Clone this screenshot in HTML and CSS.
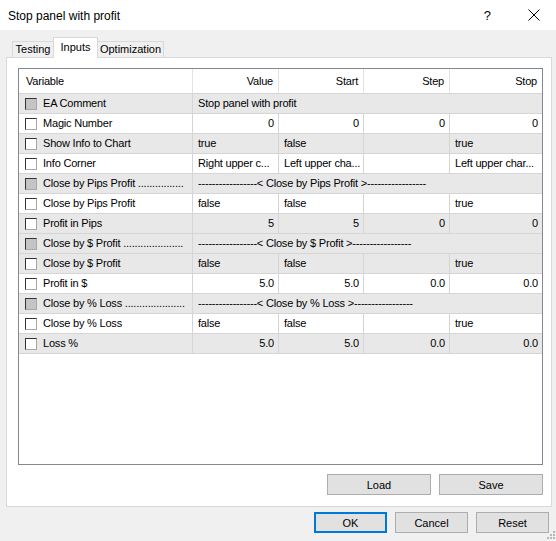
FILE: index.html
```html
<!DOCTYPE html>
<html lang="en">

<head>
    <meta charset="UTF-8">
    <title>Stop panel with profit</title>
    <link rel="stylesheet" href="styles.css">
</head>

<body>
    <div class="titlebar">
        <span class="title">Stop panel with profit</span>
        <span class="help">?</span>
        <svg class="close" width="12" height="12" viewBox="0 0 12 12">
            <path d="M0.5 0.5 L11.5 11.5 M11.5 0.5 L0.5 11.5" stroke="#000" stroke-width="1" fill="none" />
        </svg>
    </div>

    <div class="dialog">
        <div class="tabs">
            <div class="tab tab-first">Testing</div>
            <div class="tab active">Inputs</div>
            <div class="tab tab-last">Optimization</div>
        </div>

        <div class="panel">
            <div class="grid">
                <div class="row head">
                    <div class="cell var-head">Variable</div>
                    <div class="cell num">Value</div>
                    <div class="cell num">Start</div>
                    <div class="cell num">Step</div>
                    <div class="cell num">Stop</div>
                </div>

                <div class="row alt">
                    <div class="cell var"><span class="check off"></span>EA Comment</div>
                    <div class="cell span">Stop panel with profit</div>
                </div>
                <div class="row">
                    <div class="cell var"><span class="check"></span>Magic Number</div>
                    <div class="cell num">0</div>
                    <div class="cell num">0</div>
                    <div class="cell num">0</div>
                    <div class="cell num">0</div>
                </div>
                <div class="row alt">
                    <div class="cell var"><span class="check"></span>Show Info to Chart</div>
                    <div class="cell">true</div>
                    <div class="cell">false</div>
                    <div class="cell"></div>
                    <div class="cell">true</div>
                </div>
                <div class="row">
                    <div class="cell var"><span class="check"></span>Info Corner</div>
                    <div class="cell">Right upper c...</div>
                    <div class="cell">Left upper cha...</div>
                    <div class="cell"></div>
                    <div class="cell">Left upper char...</div>
                </div>
                <div class="row alt">
                    <div class="cell var"><span class="check off"></span>Close by Pips Profit ................</div>
                    <div class="cell span">-----------------&lt; Close by Pips Profit &gt;-----------------</div>
                </div>
                <div class="row">
                    <div class="cell var"><span class="check"></span>Close by Pips Profit</div>
                    <div class="cell">false</div>
                    <div class="cell">false</div>
                    <div class="cell"></div>
                    <div class="cell">true</div>
                </div>
                <div class="row alt">
                    <div class="cell var"><span class="check"></span>Profit in Pips</div>
                    <div class="cell num">5</div>
                    <div class="cell num">5</div>
                    <div class="cell num">0</div>
                    <div class="cell num">0</div>
                </div>
                <div class="row alt">
                    <div class="cell var"><span class="check off"></span>Close by $ Profit .....................</div>
                    <div class="cell span">-----------------&lt; Close by $ Profit &gt;-----------------</div>
                </div>
                <div class="row alt">
                    <div class="cell var"><span class="check"></span>Close by $ Profit</div>
                    <div class="cell">false</div>
                    <div class="cell">false</div>
                    <div class="cell"></div>
                    <div class="cell">true</div>
                </div>
                <div class="row">
                    <div class="cell var"><span class="check"></span>Profit in $</div>
                    <div class="cell num">5.0</div>
                    <div class="cell num">5.0</div>
                    <div class="cell num">0.0</div>
                    <div class="cell num">0.0</div>
                </div>
                <div class="row alt">
                    <div class="cell var"><span class="check off"></span>Close by % Loss .....................</div>
                    <div class="cell span">-----------------&lt; Close by % Loss &gt;-----------------</div>
                </div>
                <div class="row">
                    <div class="cell var"><span class="check"></span>Close by % Loss</div>
                    <div class="cell">false</div>
                    <div class="cell">false</div>
                    <div class="cell"></div>
                    <div class="cell">true</div>
                </div>
                <div class="row alt">
                    <div class="cell var"><span class="check"></span>Loss %</div>
                    <div class="cell num">5.0</div>
                    <div class="cell num">5.0</div>
                    <div class="cell num">0.0</div>
                    <div class="cell num">0.0</div>
                </div>
            </div>

            <div class="panel-buttons">
                <button class="btn wide">Load</button>
                <button class="btn wide">Save</button>
            </div>
        </div>

        <div class="dialog-buttons">
            <button class="btn default">OK</button>
            <button class="btn">Cancel</button>
            <button class="btn">Reset</button>
        </div>
    </div>

    <svg class="grip" width="9" height="9" viewBox="0 0 9 9">
        <rect x="6" y="0" width="2" height="2" fill="#b8b8b8" />
        <rect x="3" y="3" width="2" height="2" fill="#b8b8b8" />
        <rect x="6" y="3" width="2" height="2" fill="#b8b8b8" />
        <rect x="0" y="6" width="2" height="2" fill="#b8b8b8" />
        <rect x="3" y="6" width="2" height="2" fill="#b8b8b8" />
        <rect x="6" y="6" width="2" height="2" fill="#b8b8b8" />
    </svg>
</body>

</html>
```

FILE: styles.css
```css
html {
    width: 556px;
    height: 541px;
}

body {
    margin: 0;
    width: 556px;
    height: 541px;
    position: relative;
    overflow: hidden;
    background: #f0f0f0;
    font-family: "Liberation Sans", Arial, sans-serif;
    font-size: 11px;
    color: #000;
}

/* title bar */
.titlebar {
    height: 30px;
    background: #fff;
    display: flex;
    align-items: center;
    padding-left: 8px;
}

.title {
    font-size: 12px;
    flex: 1;
    padding-top: 2px;
}

.help {
    font-size: 13px;
    margin-right: 37px;
    padding-top: 1px;
}

.close {
    margin-right: 16px;
}

/* tabs */
.tabs {
    display: flex;
    align-items: flex-end;
    height: 27px;
    margin-left: 12px;
    position: relative;
    z-index: 1;
}

.tab {
    height: 15px;
    line-height: 15px;
    text-align: center;
    background: #f0f0f0;
    border-top: 1px solid #d9d9d9;
    box-sizing: content-box;
}

.tab-first {
    width: 40px;
    border-left: 1px solid #d9d9d9;
    margin-bottom: 0;
}

.tab.active {
    width: 43px;
    height: 20px;
    line-height: 19px;
    background: #fff;
    border: 1px solid #d9d9d9;
    border-bottom: none;
    margin-bottom: -1px;
}

.tab-last {
    width: 65px;
    border-right: 1px solid #d9d9d9;
}

/* panel */
.panel {
    margin-left: 6px;
    width: 546px;
    height: 450px;
    box-sizing: border-box;
    background: #fff;
    border: 1px solid #d9d9d9;
    padding: 10px 8px 0 11px;
}

.grid {
    width: 525px;
    height: 397px;
    box-sizing: border-box;
    border: 1px solid #828790;
    letter-spacing: -0.2px;
}

.row {
    display: grid;
    grid-template-columns: 174px 86px 85px 86px 92px;
    height: 20px;
    box-sizing: border-box;
    border-bottom: 1px solid #d5d5d5;
    background: #fff;
}

.row.alt {
    background: #e8e8e8;
}

.row.head {
    height: 25px;
    line-height: 24px;
}

.cell {
    box-sizing: border-box;
    border-right: 1px solid #d5d5d5;
    padding: 0 4px 0 5px;
    line-height: 19px;
    white-space: nowrap;
    overflow: hidden;
}

.row .cell:last-child {
    border-right: none;
}

.row.head .cell {
    line-height: 24px;
    padding-right: 5px;
    border-right-color: #e3e3e3;
}

.var-head {
    padding-left: 7px !important;
}

.num {
    text-align: right;
}

.span {
    grid-column: 2 / 6;
}

.var {
    display: flex;
    align-items: center;
    padding-left: 6px;
}

.check {
    width: 12px;
    height: 12px;
    box-sizing: border-box;
    margin-right: 6px;
    flex: none;
    background: #fff;
    border: 1px solid;
    border-color: #333 #a8a8a8 #a8a8a8 #333;
}

.check.off {
    background: #c4c4c4;
}

/* buttons */
.btn {
    font-family: "Liberation Sans", Arial, sans-serif;
    font-size: 11px;
    color: #000;
    background: #e1e1e1;
    border: 1px solid #adadad;
    width: 73px;
    height: 21px;
    padding: 0;
    margin: 0;
}

.btn.wide {
    width: 104px;
}

.btn.default {
    border: 2px solid #0078d7;
}

.panel-buttons {
    display: flex;
    justify-content: flex-end;
    gap: 8px;
    margin-top: 9px;
}

.dialog-buttons {
    display: flex;
    justify-content: flex-end;
    gap: 8px;
    margin-top: 5px;
    margin-right: 7px;
}

.grip {
    position: absolute;
    right: 0;
    bottom: 1px;
}
```
